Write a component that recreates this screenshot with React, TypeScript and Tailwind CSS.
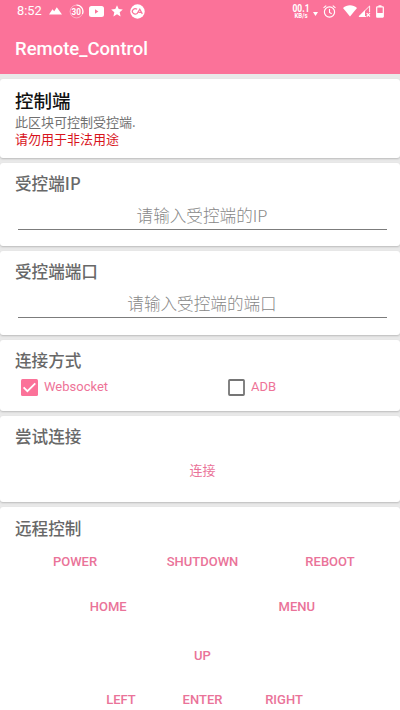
import { useState } from 'react';
import type { ReactNode } from 'react';

interface CardProps {
  title: string;
  className?: string;
  children: ReactNode;
}

function Card({ title, className = '', children }: CardProps) {
  return (
    <section className={`w-full shrink-0 rounded-[3px] bg-white px-[15px] shadow-[0_1px_2px_rgba(0,0,0,0.2)] ${className}`}>
      <h2 className="pt-[8px] font-['Noto_Sans_CJK_SC',sans-serif] text-[16.6px] leading-[24px] font-medium text-[#686868]">
        {title}
      </h2>
      {children}
    </section>
  );
}

interface FieldProps {
  placeholder: string;
}

function Field({ placeholder }: FieldProps) {
  return (
    <div className="mr-[-2px] ml-[3px] border-b border-[#7c7c7c] pt-[8px] pb-[2px]">
      <input
        type="text"
        placeholder={placeholder}
        className="block h-[24px] w-full bg-transparent pr-px text-center font-['Noto_Sans_CJK_SC',sans-serif] text-[16.6px] leading-[24px] font-light text-[#555] outline-none placeholder:text-[#888]"
      />
    </div>
  );
}

interface OptionProps {
  label: string;
  checked: boolean;
  onChange: () => void;
}

function Option({ label, checked, onChange }: OptionProps) {
  return (
    <button type="button" onClick={onChange} className="flex w-[207px] shrink-0 items-center gap-[6px] text-[13px] leading-[18px] text-[#ee7398]">
      {checked ? (
        <svg width="17" height="17" viewBox="0 0 17 17">
          <rect width="17" height="17" rx="1.5" fill="#fb7299" />
          <path d="M2.6 8.4 6.4 12.2 14.3 4.4" fill="none" stroke="#fff" strokeWidth="1.8" />
        </svg>
      ) : (
        <svg width="17" height="17" viewBox="0 0 17 17">
          <rect x="1" y="1" width="15" height="15" rx="0.8" fill="none" stroke="#757575" strokeWidth="1.8" />
        </svg>
      )}
      {label}
    </button>
  );
}

interface KeyRowProps {
  keys: string[];
  cell: string;
  className?: string;
}

function KeyRow({ keys, cell, className = '' }: KeyRowProps) {
  return (
    <div className={`flex justify-center ${className}`}>
      {keys.map((key) => (
        <button key={key} type="button" className={`shrink-0 text-center text-[13px] leading-[20px] font-medium text-[#ea7399] ${cell}`}>
          {key}
        </button>
      ))}
    </div>
  );
}

function StatusBar() {
  return (
    <div className="flex h-[22px] items-center justify-between pr-[16px] pl-[17px]">
      <div className="flex items-center">
        <span className="w-[32px] text-[12.8px] leading-[22px]">8:52</span>
        <svg width="13" height="8" viewBox="0 0 13 8" fill="#fff">
          <path d="M0 7.5 3.5 2.2 5.2 4.2 7.8 0.3 13 7.5Z" />
        </svg>
        {/* Battery saver ring */}
        <svg className="ml-[7px]" width="15" height="15" viewBox="0 0 15 15">
          <circle cx="7.5" cy="7.5" r="6.4" fill="none" stroke="#fff" strokeOpacity="0.5" strokeWidth="0.8" />
          <path d="M7.5 1A6.5 6.5 0 0 1 13.4 10" fill="none" stroke="#fff" strokeWidth="1.2" />
          <text x="7.3" y="10.5" textAnchor="middle" fontSize="8.2" fontWeight="700" fill="#fff">30</text>
        </svg>
        <svg className="ml-[5px]" width="15" height="11" viewBox="0 0 15 11">
          <rect width="15" height="11" rx="2.5" fill="#fff" />
          <path d="M6 3.3v4.4l3.4-2.2Z" fill="#fb7299" />
        </svg>
        <svg className="ml-[7px]" width="12" height="12" viewBox="0 0 12 12" fill="#fff">
          <path d="M6 0.2 7.7 4 11.8 4.4 8.7 7.2 9.6 11.4 6 9.2 2.4 11.4 3.3 7.2 0.2 4.4 4.3 4Z" />
        </svg>
        <svg className="ml-[7px]" width="15" height="15" viewBox="0 0 15 15">
          <circle cx="7.5" cy="7.5" r="7.2" fill="#fff" />
          <path d="M7.1 5.2A3 2.7 0 1 0 7.1 9.6L9.8 5.2 12.3 9.9M8.6 8.4h3" fill="none" stroke="#fb7299" strokeWidth="1.2" />
        </svg>
      </div>
      <div className="flex items-center">
        <svg className="overflow-visible" width="18" height="22" viewBox="0 0 18 22" fill="#fff" fontWeight="700">
          <text x="0.5" y="12.4" fontSize="10" textLength="17" lengthAdjust="spacingAndGlyphs">00.1</text>
          <text x="2.5" y="18.4" fontSize="6.6" textLength="13" lengthAdjust="spacingAndGlyphs">KB/s</text>
        </svg>
        <svg className="mt-[5px] ml-[3px]" width="5" height="4" viewBox="0 0 5 4" fill="#fff">
          <path d="M0 0h5L2.5 4Z" />
        </svg>
        <svg className="ml-[5px]" width="13" height="13" viewBox="0 0 12 12" fill="none" stroke="#fff">
          <circle cx="6" cy="6.5" r="4.7" strokeWidth="1.1" />
          <path d="M6 3.8v3l2 1.2M0.5 2.7 3 0.6M11.5 2.7 9 0.6" />
        </svg>
        <svg className="ml-[7px]" width="14" height="12" viewBox="0 0 14 12" fill="#fff">
          <path d="M0 2.9C4-0.5 10-0.5 14 2.9L7 11.6Z" />
        </svg>
        <svg className="ml-[1px]" width="13" height="12" viewBox="0 0 13 12">
          <path d="M11.6 7.2V1L1 11.5h7" fill="none" stroke="#fff" strokeWidth="0.9" />
          <path d="M0.5 11.7 7 5.3v6.4Z" fill="#fff" />
          <path d="M8.7 8.2 12 11.5M12 8.2 8.7 11.5" stroke="#fff" strokeWidth="1.1" />
        </svg>
        <svg className="ml-[5px]" width="8" height="13" viewBox="0 0 8 13">
          <path d="M2.5 0.3h3v1.5h-3Z" fill="#fff" />
          <rect x="0.7" y="1.9" width="6.6" height="10.2" rx="0.5" fill="none" stroke="#fff" strokeWidth="1.2" />
          <path d="M1 8h6v4H1Z" fill="#fff" />
        </svg>
      </div>
    </div>
  );
}

export default function App() {
  const [websocket, setWebsocket] = useState(true);
  const [adb, setAdb] = useState(false);

  return (
    <div className="flex h-[710px] w-[400px] flex-col overflow-hidden bg-[#e9e9e9] font-['Roboto','Noto_Sans_CJK_SC',sans-serif]">
      <header className="h-[74px] shrink-0 bg-[#fb7299] text-white">
        <StatusBar />
        <h1 className="pt-[14px] pl-[15px] text-[18.5px] leading-[26px] font-medium">Remote_Control</h1>
      </header>

      <main className="flex flex-col gap-[5px] pt-[5px]">
        <section className="h-[79px] w-full shrink-0 rounded-[3px] bg-white px-[15px] pt-[8px] font-['Noto_Sans_CJK_SC',sans-serif] text-[13px] leading-[17px] shadow-[0_1px_2px_rgba(0,0,0,0.2)]">
          <h2 className="text-[18.5px] leading-[26px] font-medium text-[#111]">控制端</h2>
          <p className="text-[#707070]">此区块可控制受控端.</p>
          <p className="text-[#d8141c]">请勿用于非法用途</p>
        </section>

        <Card title="受控端IP" className="h-[83px]">
          <Field placeholder="请输入受控端的IP" />
        </Card>

        <Card title="受控端端口" className="h-[84px]">
          <Field placeholder="请输入受控端的端口" />
        </Card>

        <Card title="连接方式" className="h-[71px]">
          <div className="flex pt-[6px] pl-[6px]">
            <Option label="Websocket" checked={websocket} onChange={() => setWebsocket(!websocket)} />
            <Option label="ADB" checked={adb} onChange={() => setAdb(!adb)} />
          </div>
        </Card>

        <Card title="尝试连接" className="h-[86px]">
          <KeyRow keys={['连接']} cell="w-[80px] font-normal!" className="ml-[5px] pt-[13px]" />
        </Card>

        <Card title="远程控制" className="h-[220px] pt-px">
          <div className="ml-[5px] pt-[12px]">
            <KeyRow keys={['POWER', 'SHUTDOWN', 'REBOOT']} cell="w-[127.5px]" />
            <KeyRow keys={['HOME', 'MENU']} cell="w-[188.5px]" className="pt-[25px]" />
            <KeyRow keys={['UP']} cell="w-[80px]" className="pt-[29px]" />
            <KeyRow keys={['LEFT', 'ENTER', 'RIGHT']} cell="w-[81.5px]" className="pt-[24px]" />
          </div>
        </Card>
      </main>
    </div>
  );
}
